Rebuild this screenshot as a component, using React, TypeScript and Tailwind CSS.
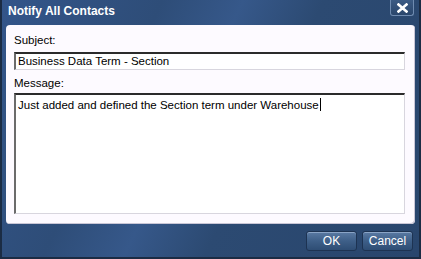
import React from 'react';

const font = { fontFamily: 'Tahoma, "Liberation Sans", Arial, sans-serif' };

function WinButton({ children, width }: { children: React.ReactNode; width: string }) {
  return (
    <button
      className={`${width} h-[20px] rounded-[3px] border border-[#1d3352] bg-gradient-to-b from-[#5a7aa3] via-[#3e5f88] to-[#2e4d74] text-[12px] text-white shadow-[inset_0_1px_0_#8aa4c6]`}
    >
      {children}
    </button>
  );
}

export default function App() {
  return (
    <div
      style={font}
      className="relative flex h-[259px] w-[421px] flex-col overflow-hidden border-l-2 border-b-2 border-r-2 border-[#1b2c44] bg-[linear-gradient(115deg,#33558a_0%,#2e4d78_30%,#36588a_45%,#2c4a72_60%,#29466d_100%)]"
    >
      {/* title bar */}
      <div className="flex h-[25px] items-start justify-between pl-[6px] pr-[5px]">
        <span className="pt-[4px] text-[12px] font-bold leading-[14px] text-white">Notify All Contacts</span>
        <div className="flex h-[16px] w-[24px] items-center justify-center rounded-b-[3px] border border-t-0 border-[#6f8bb0] bg-gradient-to-b from-[#3c5b84] to-[#2a466c]">
          <svg width="11" height="10" viewBox="0 0 11 10">
            <path d="M1.5 1.5 L9.5 8.5 M9.5 1.5 L1.5 8.5" stroke="#fff" strokeWidth="2.6" strokeLinecap="square" />
          </svg>
        </div>
      </div>

      {/* content panel */}
      <div className="mx-[4px] flex h-[199px] flex-col rounded-[4px] bg-[#fdfaff] pl-[8px] pr-[10px] pt-[8px] pb-[10px] shadow-[inset_-1px_-1px_0_#c9c6d6]">
        <label className="text-[11.5px] leading-[15px] text-black">Subject:</label>
        <div className="mt-[4px] flex h-[18px] items-center border-t-2 border-l-2 border-b border-r border-t-[#2b2b2b] border-l-[#6b6b6b] border-b-[#d8d6de] border-r-[#d8d6de] bg-white pl-[2px] text-[11.5px] text-black">
          Business Data Term - Section
        </div>
        <label className="mt-[6px] text-[11.5px] leading-[15px] text-black">Message:</label>
        <div className="mt-[2px] flex-1 border-t-2 border-l-2 border-b border-r border-t-[#2b2b2b] border-l-[#6b6b6b] border-b-[#d8d6de] border-r-[#d8d6de] bg-white pl-[2px] pt-[1px] text-[11.5px] leading-[14px] text-black">
          Just added and defined the Section term under Warehouse
          <span className="ml-px inline-block h-[13px] w-px translate-y-[2px] bg-black" />
        </div>
      </div>

      {/* buttons */}
      <div className="mt-[7px] flex justify-end gap-[5px] pr-[6px]">
        <WinButton width="w-[51px]">OK</WinButton>
        <WinButton width="w-[51px]">Cancel</WinButton>
      </div>
    </div>
  );
}
